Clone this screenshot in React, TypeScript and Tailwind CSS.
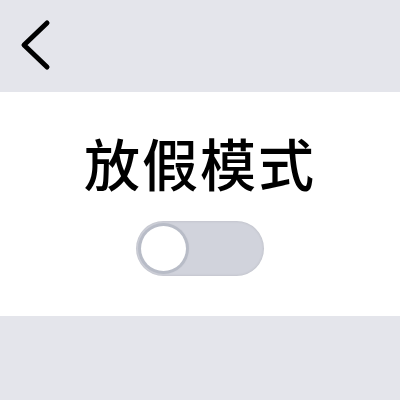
export default function App() {
  return (
    <div className="w-[400px] h-[400px] flex flex-col bg-[#e4e5eb]" style={{ fontFamily: '"Noto Sans CJK SC", "Noto Sans", sans-serif' }}>
      <div className="h-[92px] shrink-0 flex items-start pl-[18px] pt-[16px]">
        <svg width="36" height="60" viewBox="0 0 36 60" fill="none">
          <path d="M29 7 L6 29 L29 51" stroke="#000" strokeWidth="5" strokeLinecap="round" strokeLinejoin="round" />
        </svg>
      </div>
      <div className="h-[224px] shrink-0 bg-white flex flex-col items-center pt-[30px]">
        <div className="text-[56px] leading-[80px] text-black font-medium tracking-[2px]">放假模式</div>
        <div className="mt-[19px] w-[128px] h-[55px] rounded-full bg-[#d1d3dc] shadow-[inset_0_0_3px_rgba(0,0,0,0.12)] p-[5px] flex items-center">
          <div className="w-[45px] h-[45px] rounded-full bg-white ring-[3px] ring-[#b8bcc7] shadow-[0_0_4px_rgba(0,0,0,0.2)]" />
        </div>
      </div>
      <div className="flex-1" />
    </div>
  );
}
